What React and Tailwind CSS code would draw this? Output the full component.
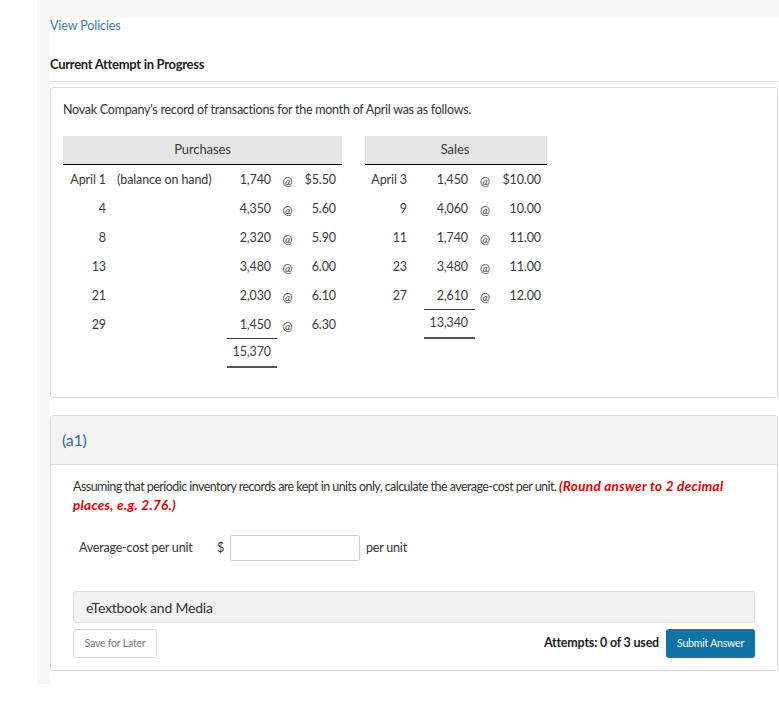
import React from "react";

const purchases = [
  { d: "April 1", desc: "(balance on hand)", q: "1,740", p: "$5.50" },
  { d: "4", q: "4,350", p: "5.60" },
  { d: "8", q: "2,320", p: "5.90" },
  { d: "13", q: "3,480", p: "6.00" },
  { d: "21", q: "2,030", p: "6.10" },
  { d: "29", q: "1,450", p: "6.30", line: true },
];

const sales = [
  { d: "April 3", q: "1,450", p: "$10.00" },
  { d: "9", q: "4,060", p: "10.00" },
  { d: "11", q: "1,740", p: "11.00" },
  { d: "23", q: "3,480", p: "11.00" },
  { d: "27", q: "2,610", p: "12.00", line: true },
];

function App() {
  return (
    <div className="min-h-[727px] bg-white font-['Lato','Noto_Sans',sans-serif] text-[#333]">
      <div className="ml-[37px] bg-[#f7f7f7] pt-[17px] pl-[13px]">
        <div className="bg-white pb-[13px]">
          <div className="h-[17px] text-[12.5px] leading-[17px] tracking-[-0.1px] text-[#3b7aa5]">View Policies</div>
          <div className="mt-[22px] h-[17px] text-[13px] font-bold leading-[17px] tracking-[-0.3px] text-[#222]">
            Current Attempt in Progress
          </div>
          <div className="mt-[8px] border-t border-[#e6e6e6]"></div>

          {/* question card */}
          <div className="mt-[5px] mr-[1px] h-[311px] rounded-[3px] border border-[#dcdcdc] px-[12px] pt-[13px]">
            <p className="text-[12.5px] leading-[18px] tracking-[-0.25px]">
              Novak Company's record of transactions for the month of April was as follows.
            </p>
            <div className="mt-[17px] flex text-[12.5px] tracking-[-0.1px] text-[#3a3a3a]">
              <div className="w-[279px]">
                <div className="flex h-[29px] items-center justify-center border-b border-black bg-[#e5e5e5] text-[13px]">
                  Purchases
                </div>
                {purchases.map((r, i) => (
                  <div key={i} className="grid h-[29px] grid-cols-[43px_121px_50px_21px_38px_6px] items-center pt-[2px]">
                    <div className="text-right">{r.d}</div>
                    <div className="pl-[11px]">{r.desc}</div>
                    <div className={"flex h-full items-center justify-end pr-[6px] " + (r.line ? "border-b border-[#333]" : "")}>
                      {r.q}
                    </div>
                    <div className="text-center text-[12px]">@</div>
                    <div className="text-right">{r.p}</div>
                    <div></div>
                  </div>
                ))}
                <div className="grid h-[29px] grid-cols-[43px_121px_50px_21px_38px_6px] items-center">
                  <div></div>
                  <div></div>
                  <div className="flex h-full items-center justify-end border-b-2 border-[#555] pr-[6px]">15,370</div>
                </div>
              </div>
              <div className="ml-[23px] w-[182px]">
                <div className="flex h-[29px] items-center justify-center border-b border-black bg-[#e5e5e5] pr-[2px] text-[13px]">
                  Sales
                </div>
                {sales.map((r, i) => (
                  <div key={i} className="grid h-[29px] grid-cols-[42px_17px_51px_20px_46px_6px] items-center pt-[2px]">
                    <div className="text-right">{r.d}</div>
                    <div></div>
                    <div className={"flex h-full items-center justify-end pr-[7px] " + (r.line ? "border-b border-[#333]" : "")}>
                      {r.q}
                    </div>
                    <div className="text-center text-[12px]">@</div>
                    <div className="text-right">{r.p}</div>
                    <div></div>
                  </div>
                ))}
                <div className="grid h-[29px] grid-cols-[42px_17px_51px_20px_46px_6px] items-center">
                  <div></div>
                  <div></div>
                  <div className="flex h-full items-center justify-end border-b-2 border-[#555] pr-[7px]">13,340</div>
                </div>
              </div>
            </div>
          </div>

          {/* part a1 */}
          <div className="mt-[17px] mr-[1px] rounded-[3px] border border-[#dcdcdc]">
            <div className="flex h-[49px] items-center border-b border-[#dcdcdc] bg-[#f3f3f3] px-[11px] text-[16px] tracking-[-0.2px] text-[#2f6f98]">
              (a1)
            </div>
            <div className="px-[22px] pb-[12px] pt-[12px]">
              <p className="text-[12.5px] leading-[18px] tracking-[-0.55px]">
                Assuming that periodic inventory records are kept in units only, calculate the average-cost per unit.{" "}
                <span className="text-[13.5px] font-bold italic tracking-[0.3px] text-[#e00000]">
                  (Round answer to 2 decimal
                  <br />
                  places, e.g. 2.76.)
                </span>
              </p>
              <div className="mt-[20px] flex h-[26px] items-center text-[12.5px] tracking-[-0.2px]">
                <span className="ml-[6px] w-[138px]">Average-cost per unit</span>
                <span className="w-[13px]">$</span>
                <div className="h-[26px] w-[130px] rounded-[2px] border border-[#cfcfcf] bg-white"></div>
                <span className="ml-[6px]">per unit</span>
              </div>
              <div className="mt-[30px] flex h-[32px] items-center rounded-[3px] border border-[#dedede] bg-[#f2f2f2] px-[12px] text-[14px] tracking-[-0.2px] text-[#333]">
                eTextbook and Media
              </div>
              <div className="mt-[6px] flex items-center justify-between">
                <div className="flex h-[29px] w-[84px] items-center justify-center rounded-[3px] border border-[#dcdcdc] bg-white text-[10.5px] tracking-[-0.2px] text-[#777]">
                  Save for Later
                </div>
                <div className="flex items-center">
                  <span className="mr-[7px] text-[12.5px] font-bold tracking-[-0.2px] text-[#222]">Attempts: 0 of 3 used</span>
                  <div className="flex h-[29px] w-[89px] items-center justify-center rounded-[3px] bg-[#0f73a6] text-[10.5px] tracking-[-0.2px] text-white">
                    Submit Answer
                  </div>
                </div>
              </div>
            </div>
          </div>
        </div>
      </div>
    </div>
  );
}

export default App;
